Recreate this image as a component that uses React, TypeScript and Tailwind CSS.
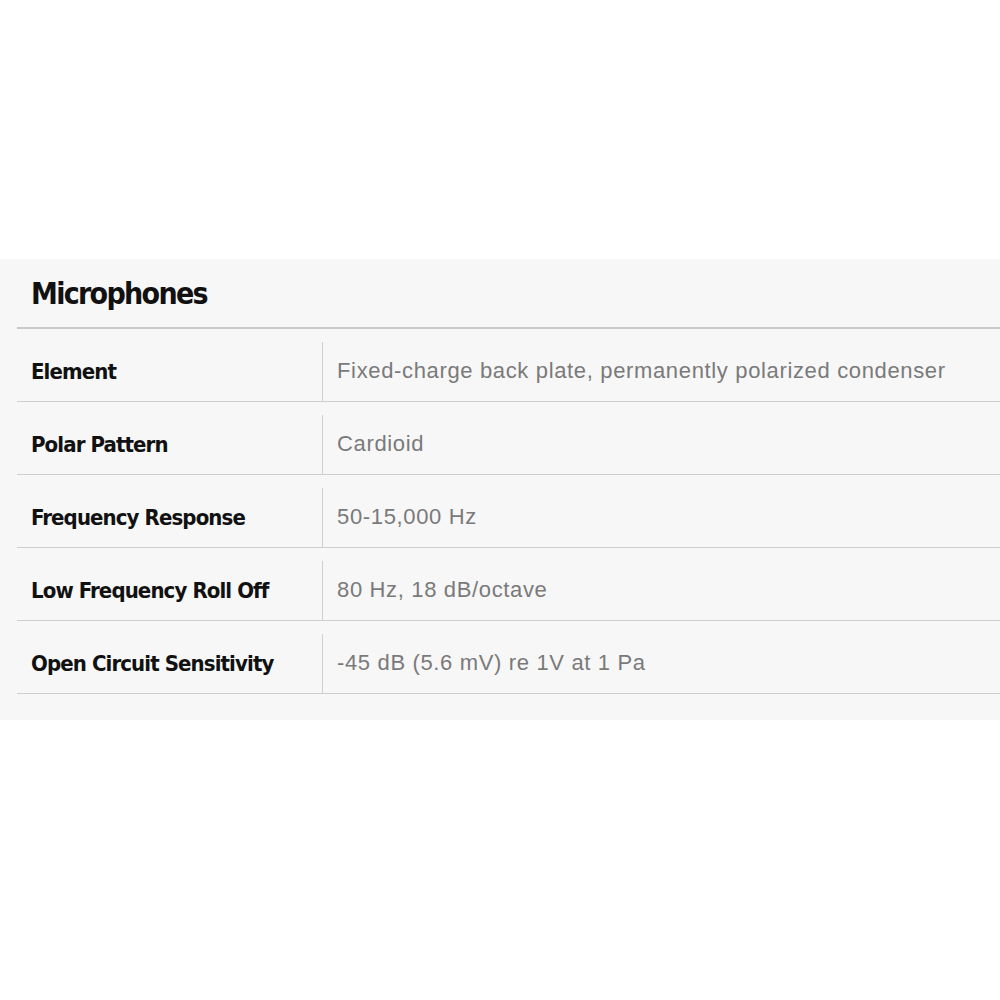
import React from "react";

const specs = [
  { label: "Element", value: "Fixed-charge back plate, permanently polarized condenser" },
  { label: "Polar Pattern", value: "Cardioid" },
  { label: "Frequency Response", value: "50-15,000 Hz" },
  { label: "Low Frequency Roll Off", value: "80 Hz, 18 dB/octave" },
  { label: "Open Circuit Sensitivity", value: "-45 dB (5.6 mV) re 1V at 1 Pa" },
];

const condensed = "font-['Liberation_Sans_Narrow','DejaVu_Sans_Condensed',sans-serif]";

export default function App() {
  return (
    <div className="w-[1000px] h-[1000px] bg-white pt-[259px]">
      <div className="bg-[#f7f7f7] pl-[17px] h-[461px]">
        <h2 className={`${condensed} font-bold text-[30px] leading-none tracking-[-1.7px] text-[#111] pl-[14px] pt-[20px] pb-[18px] border-b-2 border-[#c8c8c8]`}>
          Microphones
        </h2>
        {specs.map((row, i) => (
          <div key={i} className="flex h-[73px] border-b border-[#cfcfcf]">
            <div className={`${condensed} font-bold text-[22px] tracking-[-0.9px] text-[#111] w-[305px] pl-[14px] pt-[32px] leading-none`}>
              {row.label}
            </div>
            <div className="mt-[13px] border-l border-[#cfcfcf] flex-1 pl-[14px] pt-[18px] font-['Liberation_Sans',sans-serif] text-[22px] text-[#7a7a7a] leading-none tracking-[0.65px]">
              {row.value}
            </div>
          </div>
        ))}
      </div>
    </div>
  );
}
